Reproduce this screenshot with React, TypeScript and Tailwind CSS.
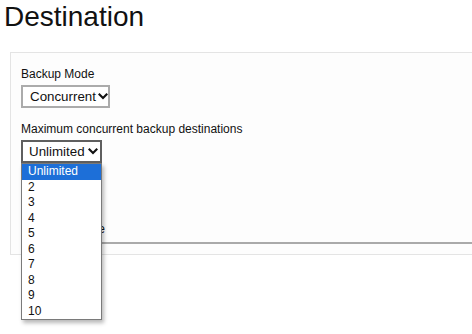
import React from "react";

const Chevron = () => (
  <svg width="10" height="7" viewBox="0 0 10 7" className="shrink-0">
    <polyline points="1.5,1.5 5,5 8.5,1.5" fill="none" stroke="#111" strokeWidth="2.1" strokeLinecap="square" />
  </svg>
);

const options = ["Unlimited", "2", "3", "4", "5", "6", "7", "8", "9", "10"];

export default function App() {
  return (
    <div className="w-[472px] h-[334px] overflow-hidden bg-white text-[#111] font-['Liberation_Sans',Arial,sans-serif]">
      <h1 className="text-[28px] leading-[31px] pl-[4px] pt-[1px]">Destination</h1>
      <div className="mt-[20px] ml-[10px] w-[520px] border border-[#e4e4e4] bg-[#fdfdfd] pt-[14px] pl-[10px] pb-[10px]">
        <div className="text-[12px] leading-[14px]">Backup Mode</div>
        <div className="mt-[4px] inline-flex items-center h-[23px] w-[89px] border-2 border-[#ababab] bg-white pl-[7px] pr-[2px] gap-[2px] text-[13.33px]">
          <span className="flex-1">Concurrent</span>
          <Chevron />
        </div>
        <div className="mt-[14px] text-[12px] leading-[14px]">Maximum concurrent backup destinations</div>
        <div className="relative mt-[4px] w-[81px]">
          <div className="flex items-center h-[23px] w-[81px] border-2 border-[#5f5f5f] bg-white pl-[6px] pr-[2px] gap-[2px] text-[13.33px]">
            <span className="flex-1">Unlimited</span>
            <Chevron />
          </div>
          <div className="absolute left-0 top-[23px] z-10 w-[81px] border border-[#7a7a7a] bg-white shadow-[2px_3px_4px_rgba(0,0,0,0.28)]">
            {options.map((o, i) => (
              <div
                key={o}
                className={
                  i === 0
                    ? "h-[15.5px] leading-[15.5px] pl-[6px] text-[12px] bg-[#1d6fd8] text-white"
                    : "h-[15.5px] leading-[15.5px] pl-[6px] text-[12px] text-[#111]"
                }
              >
                {o}
              </div>
            ))}
          </div>
        </div>
        <div className="mt-[59px] pb-[6px] border-b-2 border-[#aaaaaa] text-[12px] leading-[14px] pl-[34px]">Schedule</div>
      </div>
    </div>
  );
}
